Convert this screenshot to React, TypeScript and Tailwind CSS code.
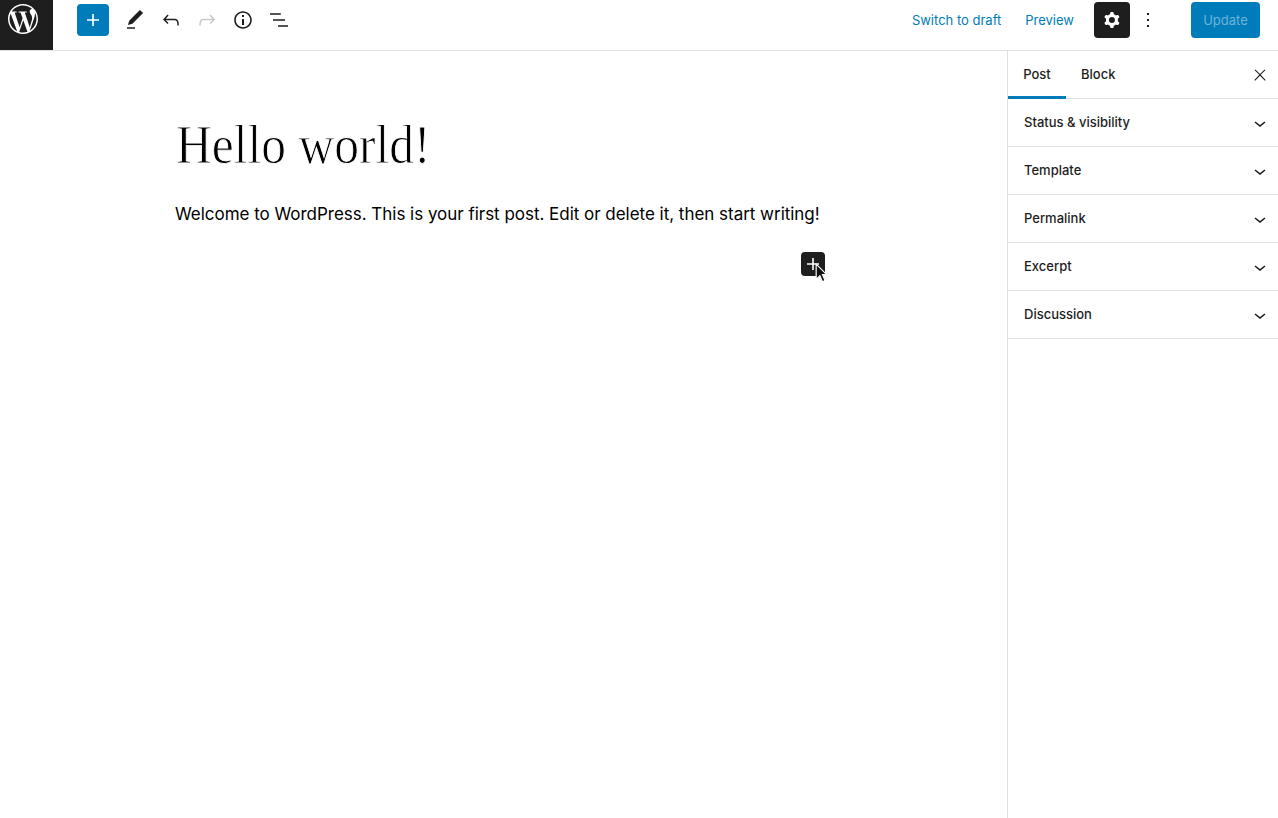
import { SiWordpress } from 'react-icons/si';

const paths = {
  plus: "M18 11.2h-5.2V6h-1.6v5.2H6v1.6h5.2V18h1.6v-5.2H18z",
  tools: "M20.1 5.1L16.9 2 6.2 12.7l-1.3 4.4 4.5-1.3L20.1 5.1zM4 20.8h8v-1.5H4v1.5z",
  undo: "M18.3 11.7c-.6-.6-1.4-.9-2.3-.9H6.7l2.9-3.3-1.1-1-4.5 5L8.5 16l1-1-2.7-2.7H16c.5 0 .9.2 1.3.5 1 1 1 3.4 1 4.5v.3h1.5v-.2c0-1.5 0-4.3-1.5-5.7z",
  redo: "M15.6 6.5l-1.1 1 2.9 3.3H8c-.9 0-1.7.3-2.3.9-1.4 1.5-1.4 4.2-1.4 5.6v.2h1.5v-.3c0-1.1 0-3.5 1-4.5.3-.3.7-.5 1.3-.5h9.2L14.5 15l1.1 1.1 4.6-4.6-4.6-5z",
  info: "M12 3.2c-4.8 0-8.8 3.9-8.8 8.8 0 4.8 3.9 8.8 8.8 8.8 4.8 0 8.8-3.9 8.8-8.8 0-4.8-4-8.8-8.8-8.8zm0 16c-4 0-7.2-3.3-7.2-7.2C4.8 8 8 4.8 12 4.8s7.2 3.3 7.2 7.2c0 4-3.2 7.2-7.2 7.2zM11 17h2v-6h-2v6zm0-8h2V7h-2v2z",
  list: "M3 5.2h10.8v1.5H3zM6 11.2h12v1.5H6zM11 17.2h10v1.5H11z",
  cog: "M10.289 4.836A1 1 0 0111.275 4h1.306a1 1 0 01.987.836l.244 1.466c.787.26 1.503.679 2.108 1.218l1.393-.522a1 1 0 011.216.437l.653 1.13a1 1 0 01-.23 1.273l-1.148.944a6.025 6.025 0 010 2.435l1.149.946a1 1 0 01.23 1.272l-.653 1.13a1 1 0 01-1.216.437l-1.394-.522c-.605.54-1.32.958-2.108 1.218l-.244 1.466a1 1 0 01-.987.836h-1.306a1 1 0 01-.986-.836l-.244-1.466a5.995 5.995 0 01-2.108-1.218l-1.394.522a1 1 0 01-1.217-.436l-.653-1.131a1 1 0 01.23-1.272l1.149-.946a6.026 6.026 0 010-2.435l-1.148-.944a1 1 0 01-.23-1.272l.653-1.131a1 1 0 011.217-.437l1.393.522a5.994 5.994 0 012.108-1.218l.244-1.466zM14.929 12a3 3 0 11-6 0 3 3 0 016 0z",
  more: "M13 19h-2v-2h2v2zm0-6h-2v-2h2v2zm0-6h-2V5h2v2z",
  close: "M13 11.8l6.1-6.3-1-1-6.1 6.2-6.1-6.2-1 1 6.1 6.3-6.5 6.7 1 1 6.5-6.6 6.5 6.6 1-1z",
  chevron: "M17.5 11.6L12 16l-5.5-4.4.9-1.2L12 14l4.5-3.6 1 1.2z",
};

function Icon({ d, className }: { d: string; className?: string }) {
  return (
    <svg viewBox="0 0 24 24" width="24" height="24" fill="currentColor" fillRule="evenodd" className={className}>
      <path d={d} />
    </svg>
  );
}

const panels = ["Status & visibility", "Template", "Permalink", "Excerpt", "Discussion"];

export default function App() {
  return (
    <div className="h-screen flex flex-col bg-white text-[#1e1e1e] overflow-hidden font-['Inter',sans-serif]">
      <header className="h-[51px] shrink-0 flex border-b border-[#e0e0e0]">
        <div className="w-[53px] h-[50px] bg-[#1e1e1e] flex items-center justify-center pb-[12px] pr-[7px] text-white">
          <SiWordpress size={30} />
        </div>
        <div className="flex h-10 items-center ml-6">
          <button className="w-8 h-8 rounded-sm bg-[#007cba] text-white flex items-center justify-center">
            <Icon d={paths.plus} />
          </button>
          <div className="flex ml-2">
            <button className="w-9 h-9 flex items-center justify-center"><Icon d={paths.tools} /></button>
            <button className="w-9 h-9 flex items-center justify-center"><Icon d={paths.undo} /></button>
            <button className="w-9 h-9 flex items-center justify-center text-[#c9c9c9]"><Icon d={paths.redo} /></button>
            <button className="w-9 h-9 flex items-center justify-center"><Icon d={paths.info} /></button>
            <button className="w-9 h-9 flex items-center justify-center"><Icon d={paths.list} /></button>
          </div>
        </div>
        <div className="ml-auto flex h-10 items-center pr-[18px] text-[13px] text-[#007cba]">
          <span className="pt-[2px]">Switch to draft</span>
          <span className="ml-6 pt-[2px]">Preview</span>
          <button className="ml-[20px] w-9 h-9 rounded-sm bg-[#1e1e1e] text-white flex items-center justify-center">
            <Icon d={paths.cog} />
          </button>
          <button className="w-9 h-9 flex items-center justify-center text-[#1e1e1e]"><Icon d={paths.more} /></button>
          <button className="ml-[25px] w-[69px] h-9 pt-[2px] rounded-sm bg-[#007cba] text-[#6fb3d9]">Update</button>
        </div>
      </header>

      <div className="flex-1 flex min-h-0">
        <main className="flex-1 pl-[175px] pt-[60px]">
          <h1 className="font-['Liberation_Serif',serif] text-[54px] leading-[68px] font-normal text-black ml-px origin-left scale-x-[.917] [-webkit-text-stroke:0.9px_white]">Hello world!</h1>
          <p className="text-[17px] leading-[28px] mt-[21px] text-black tracking-[-0.025px]">
            Welcome to WordPress. This is your first post. Edit or delete it, then start writing!
          </p>
          <div className="w-[650px] flex justify-end mt-[24px]">
            <div className="relative w-6 h-6 rounded-sm bg-[#1e1e1e] text-white flex items-center justify-center">
              <Icon d={paths.plus} className="w-6 h-6" />
              <svg viewBox="0 0 12 18" width="14" height="21" className="absolute left-[14px] top-[11px]">
                <path d="M1 1v13l3.2-3 2.2 5 2.2-1-2.2-5H10z" fill="#111" stroke="#fff" strokeWidth="1" />
              </svg>
            </div>
          </div>
        </main>

        <aside className="w-[271px] shrink-0 border-l border-[#e0e0e0] text-[13px] font-medium">
          <div className="h-[48px] flex items-stretch border-b border-[#e0e0e0]">
            <div className="w-[58px] flex items-center justify-center border-b-[3px] border-[#007cba] h-[48px] pt-[3px]">Post</div>
            <div className="ml-[15px] pt-[1px] flex items-center">Block</div>
            <div className="ml-auto pr-[9px] flex items-center"><Icon d={paths.close} className="w-[18px] h-[18px]" /></div>
          </div>
          {panels.map((p) => (
            <div key={p} className="h-[48px] flex items-center justify-between pl-4 pr-[6px] border-b border-[#e0e0e0]">
              <span className="pt-[1px]">{p}</span>
              <Icon d={paths.chevron} />
            </div>
          ))}
        </aside>
      </div>
    </div>
  );
}
